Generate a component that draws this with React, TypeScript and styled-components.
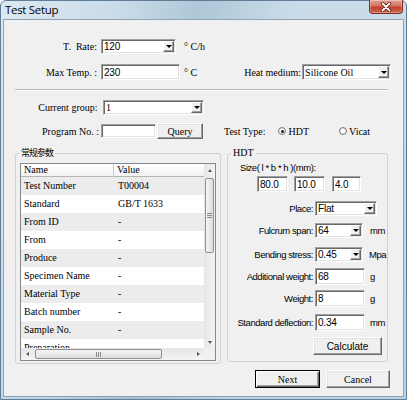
import styled, { createGlobalStyle, css } from 'styled-components';

const SONG = `"Liberation Serif", "Noto Sans CJK SC", serif`;
const SANS = `"Liberation Sans", Arial, sans-serif`;
const CJK = `"Noto Sans CJK SC", sans-serif`;

type Face = 'song' | 'sans';
const face = (f?: Face) => (f === 'sans' ? SANS : SONG);

const GlobalStyle = createGlobalStyle`
  html, body { margin: 0; padding: 0; background: #ffffff; }
  *, *::before, *::after { box-sizing: border-box; }
`;

const Window = styled.div`
  width: 407px;
  height: 400px;
  display: flex;
  flex-direction: column;
  padding: 0 3px 3px;
  border: 1px solid #5f7d96;
  border-radius: 6px 6px 0 0;
  background:
    linear-gradient(100deg, rgba(255, 255, 255, 0.35) 0%, rgba(255, 255, 255, 0) 25%,
      rgba(60, 120, 140, 0.2) 42%, rgba(255, 255, 255, 0) 62%),
    linear-gradient(180deg, #cadcea 0%, #bcd3e3 100%);
`;

const TitleBar = styled.div`
  height: 19px;
  display: flex;
  align-items: flex-start;
  justify-content: space-between;
`;

const Title = styled.span`
  margin: 2px 0 0 1px;
  font: 11.5px/14px "Open Sans", sans-serif;
  letter-spacing: -0.3px;
  color: #000;
`;

const CloseButton = styled.div`
  width: 34px;
  height: 14px;
  margin-top: -1px;
  display: flex;
  align-items: center;
  justify-content: center;
  border: 1px solid #7d2a20;
  border-top: none;
  border-radius: 0 0 4px 4px;
  background: linear-gradient(180deg, #e4a394 0%, #d4725f 45%, #c0402c 55%, #d2664f 100%);
  box-shadow: inset 0 0 0 1px rgba(255, 255, 255, 0.3);
`;

const Client = styled.div`
  flex: 1;
  display: flex;
  flex-direction: column;
  padding-top: 18px;
  background: #f0f0f0;
  box-shadow: 0 0 0 1px #8ea3b5;
  font-family: ${SONG};
  font-size: 10px;
  color: #000;
`;

const Row = styled.div<{ $top?: number }>`
  display: flex;
  align-items: center;
  height: 16px;
  margin-top: ${(p) => p.$top ?? 0}px;
`;

const Label = styled.span<{ $w?: number; $gap?: number; $left?: number }>`
  flex: none;
  ${(p) => p.$w !== undefined && css`width: ${p.$w}px;`}
  margin: 0 ${(p) => p.$gap ?? 2}px 0 ${(p) => p.$left ?? 0}px;
  text-align: right;
  white-space: pre;
`;

const Unit = styled.span<{ $gap: number; $font?: Face }>`
  flex: none;
  margin-left: ${(p) => p.$gap}px;
  font-family: ${(p) => face(p.$font)};
  font-size: ${(p) => (p.$font === 'sans' ? '9.5px' : '10px')};
  white-space: nowrap;
`;

const Field = styled.div<{ $w: number; $h?: number; $font?: Face; $left?: number }>`
  flex: none;
  display: flex;
  align-items: center;
  width: ${(p) => p.$w}px;
  height: ${(p) => p.$h ?? 16}px;
  margin-left: ${(p) => p.$left ?? 0}px;
  padding-left: 2px;
  background: #fff;
  border: 1px solid;
  border-color: #a0a0a0 #ffffff #ffffff #a0a0a0;
  box-shadow: inset 1px 1px 0 #696969, inset -1px -1px 0 #e3e3e3;
  font-family: ${(p) => face(p.$font)};
  font-size: 10px;
  letter-spacing: ${(p) => (p.$font === 'sans' ? '-0.2px' : '0')};
  white-space: nowrap;
  overflow: hidden;
`;

const DropButton = styled.span`
  flex: none;
  width: 11px;
  align-self: stretch;
  margin: 1px 1px 1px auto;
  display: flex;
  align-items: center;
  justify-content: center;
  background: #f0f0f0;
  border: 1px solid;
  border-color: #ffffff #696969 #696969 #ffffff;
  box-shadow: inset -1px -1px 0 #a0a0a0;

  &::after {
    content: '';
    border-left: 3px solid transparent;
    border-right: 3px solid transparent;
    border-top: 3px solid #000;
  }
`;

const Button = styled.button<{ $w: number; $h: number; $font?: Face; $default?: boolean; $left?: number }>`
  flex: none;
  width: ${(p) => p.$w}px;
  height: ${(p) => p.$h}px;
  margin: 0 0 0 ${(p) => p.$left ?? 0}px;
  padding: 0;
  background: #f0f0f0;
  border: 1px solid;
  border-color: #ffffff #696969 #696969 #ffffff;
  box-shadow: inset -1px -1px 0 #a0a0a0, inset 1px 1px 0 #e3e3e3;
  font-family: ${(p) => face(p.$font)};
  font-size: 10px;
  color: #000;

  ${(p) =>
    p.$default &&
    css`
      border-color: #000;
      box-shadow: inset 1px 1px 0 #fff, inset -1px -1px 0 #696969, inset -2px -2px 0 #a0a0a0;
    `}
`;

const Radio = styled.span<{ $checked?: boolean; $left: number }>`
  flex: none;
  width: 8px;
  height: 8px;
  margin: 0 2px 0 ${(p) => p.$left}px;
  display: flex;
  align-items: center;
  justify-content: center;
  border: 1px solid #7b7b7b;
  border-radius: 50%;
  background: radial-gradient(circle, #ffffff 35%, #d2d2d2 100%);

  &::after {
    content: '';
    display: ${(p) => (p.$checked ? 'block' : 'none')};
    width: 3px;
    height: 3px;
    border-radius: 50%;
    background: #1a1a1a;
  }
`;

const Separator = styled.div`
  height: 2px;
  margin: 9px 15px 0 11px;
  border-top: 1px solid #b9b9b9;
  border-bottom: 1px solid #ffffff;
`;

const Groups = styled.div`
  display: flex;
  gap: 6px;
  margin-top: 8px;
  padding-left: 11px;
`;

const Group = styled.fieldset<{ $w: number; $h: number; $pad: string }>`
  flex: none;
  width: ${(p) => p.$w}px;
  height: ${(p) => p.$h}px;
  min-width: 0;
  margin: 0;
  padding: ${(p) => p.$pad};
  border: 1px solid #d0d0d0;
  border-radius: 3px;
`;

const Legend = styled.legend<{ $cjk?: boolean }>`
  padding: 0 2px;
  margin-left: -1px;
  line-height: 12px;
  font-family: ${(p) => (p.$cjk ? CJK : SONG)};
  font-size: ${(p) => (p.$cjk ? '9px' : '10px')};
  letter-spacing: ${(p) => (p.$cjk ? '-1px' : '0')};
`;

/* list view */

const ListView = styled.div`
  width: 196px;
  height: 198px;
  display: grid;
  grid-template-columns: 1fr 11px;
  grid-template-rows: 1fr 12px;
  border: 1px solid #828790;
  background: #fff;
  overflow: hidden;
`;

const ListBody = styled.div`
  overflow: hidden;
`;

const HeaderRow = styled.div`
  display: grid;
  grid-template-columns: 93px 110px;
  height: 13px;
`;

const HeaderCell = styled.div`
  padding-left: 3px;
  line-height: 12px;
  background: linear-gradient(180deg, #ffffff 0%, #f2f2f2 100%);
  border-right: 1px solid #c9c9c9;
  border-bottom: 1px solid #b5b5b5;
  white-space: nowrap;
`;

const DataRow = styled.div<{ $shade: boolean }>`
  display: grid;
  grid-template-columns: 93px 110px;
  height: 18px;
  line-height: 18px;
  background: ${(p) => (p.$shade ? '#ececec' : '#ffffff')};
`;

const Cell = styled.div<{ $pad: number }>`
  padding-left: ${(p) => p.$pad}px;
  white-space: nowrap;
  overflow: hidden;
`;

const ScrollTrack = styled.div<{ $dir: 'v' | 'h' }>`
  display: flex;
  flex-direction: ${(p) => (p.$dir === 'v' ? 'column' : 'row')};
  background: ${(p) =>
    p.$dir === 'v'
      ? 'linear-gradient(90deg, #e6e6e6 0%, #f4f4f4 100%)'
      : 'linear-gradient(180deg, #e6e6e6 0%, #f4f4f4 100%)'};
`;

const ScrollArrow = styled.div<{ $dir: 'up' | 'down' | 'left' | 'right' }>`
  flex: none;
  width: ${(p) => (p.$dir === 'up' || p.$dir === 'down' ? '100%' : '12px')};
  height: ${(p) => (p.$dir === 'up' || p.$dir === 'down' ? '12px' : '100%')};
  display: flex;
  align-items: center;
  justify-content: center;

  &::after {
    content: '';
    ${(p) =>
      p.$dir === 'up'
        ? css`border-left: 2.5px solid transparent; border-right: 2.5px solid transparent; border-bottom: 3px solid #555;`
        : p.$dir === 'down'
        ? css`border-left: 2.5px solid transparent; border-right: 2.5px solid transparent; border-top: 3px solid #555;`
        : p.$dir === 'left'
        ? css`border-top: 2.5px solid transparent; border-bottom: 2.5px solid transparent; border-right: 3px solid #555;`
        : css`border-top: 2.5px solid transparent; border-bottom: 2.5px solid transparent; border-left: 3px solid #555;`}
  }
`;

const Thumb = styled.div<{ $dir: 'v' | 'h'; $size: number }>`
  flex: none;
  display: flex;
  align-items: center;
  justify-content: center;
  gap: 1px;
  flex-direction: ${(p) => (p.$dir === 'v' ? 'column' : 'row')};
  ${(p) =>
    p.$dir === 'v'
      ? css`height: ${p.$size}px; margin: 2px 1px 0;`
      : css`width: ${p.$size}px; margin: 1px 0 1px 2px;`}
  border: 1px solid #8f8f8f;
  border-radius: 2px;
  background: ${(p) =>
    p.$dir === 'v'
      ? 'linear-gradient(90deg, #f6f6f6 0%, #dcdcdc 100%)'
      : 'linear-gradient(180deg, #f6f6f6 0%, #dcdcdc 100%)'};
`;

const Grip = styled.span<{ $dir: 'v' | 'h' }>`
  flex: none;
  background: #8a8a8a;
  ${(p) => (p.$dir === 'v' ? css`width: 5px; height: 1px;` : css`width: 1px; height: 5px;`)}
`;

const Spacer = styled.div`
  flex: 1;
`;

const Corner = styled.div`
  background: #f0f0f0;
`;

/* HDT panel */

const HdtRow = styled.div<{ $top: number; $h?: number; $left?: number }>`
  display: flex;
  align-items: center;
  height: ${(p) => p.$h ?? 16}px;
  margin-top: ${(p) => p.$top}px;
  margin-left: ${(p) => p.$left ?? 0}px;
  font-family: ${SANS};
  font-size: 9.5px;
  letter-spacing: -0.45px;
  white-space: nowrap;
`;

const HdtLabel = styled.span`
  flex: none;
  width: 81px;
  margin-right: 2px;
  display: flex;
  justify-content: flex-end;
  white-space: nowrap;
`;

const Footer = styled.div`
  display: flex;
  justify-content: flex-end;
  gap: 6px;
  margin-top: 6px;
  padding-right: 13px;
`;

const params: [string, string][] = [
  ['Test Number', 'T00004'],
  ['Standard', 'GB/T 1633'],
  ['From ID', '-'],
  ['From', '-'],
  ['Produce', '-'],
  ['Specimen Name', '-'],
  ['Material Type', '-'],
  ['Batch number', '-'],
  ['Sample No.', '-'],
  ['Preparation', '-'],
];

function Combo({ w, h = 15, value, font }: { w: number; h?: number; value: string; font?: Face }) {
  return (
    <Field $w={w} $h={h} $font={font}>
      {value}
      <DropButton />
    </Field>
  );
}

export default function App() {
  return (
    <>
      <GlobalStyle />
      <Window>
        <TitleBar>
          <Title>Test Setup</Title>
          <CloseButton>
            <svg width="12" height="10" viewBox="0 0 12 10">
              <path d="M2.5 1.5 L9.5 8.5 M9.5 1.5 L2.5 8.5" stroke="#5a1a14" strokeWidth="3.4" strokeLinecap="round" />
              <path d="M2.5 1.5 L9.5 8.5 M9.5 1.5 L2.5 8.5" stroke="#ffffff" strokeWidth="1.8" strokeLinecap="round" />
            </svg>
          </CloseButton>
        </TitleBar>

        <Client>
          <Row>
            <Label $w={93} $gap={4}>T.  Rate:</Label>
            <Combo w={75} value="120" font="sans" />
            <Unit $gap={8}>° C/h</Unit>
          </Row>

          <Row $top={10}>
            <Label $w={93} $gap={4}>Max Temp. :</Label>
            <Field $w={79} $font="sans">230</Field>
            <Unit $gap={4}>° C</Unit>
            <Label $left={47} $gap={1}>Heat medium:</Label>
            <Combo w={89} h={16} value="Silicone Oil" />
          </Row>

          <Separator />

          <Row $top={8}>
            <Label $w={96} $gap={3}>Current group: </Label>
            <Combo w={101} value="1" />
          </Row>

          <Row $top={8}>
            <Label $w={95} $gap={2}>Program No. :</Label>
            <Field $w={55} $h={14} />
            <Button $w={46} $h={16} $left={1}>Query</Button>
            <Label $left={21} $gap={0}>Test Type:</Label>
            <Radio $left={13} $checked />
            <span>HDT</span>
            <Radio $left={30} />
            <span>Vicat</span>
          </Row>

          <Groups>
            <Group $w={206} $h={217} $pad="4px 3px 2px 4px">
              <Legend $cjk>常规参数</Legend>
              <ListView>
                <ListBody>
                  <HeaderRow>
                    <HeaderCell>Name</HeaderCell>
                    <HeaderCell>Value</HeaderCell>
                  </HeaderRow>
                  {params.map(([name, value], i) => (
                    <DataRow key={name} $shade={i % 2 === 0}>
                      <Cell $pad={3}>{name}</Cell>
                      <Cell $pad={4}>{value}</Cell>
                    </DataRow>
                  ))}
                </ListBody>
                <ScrollTrack $dir="v">
                  <ScrollArrow $dir="up" />
                  <Thumb $dir="v" $size={75}>
                    <Grip $dir="v" />
                    <Grip $dir="v" />
                    <Grip $dir="v" />
                  </Thumb>
                  <Spacer />
                  <ScrollArrow $dir="down" />
                </ScrollTrack>
                <ScrollTrack $dir="h">
                  <ScrollArrow $dir="left" />
                  <Thumb $dir="h" $size={127}>
                    <Grip $dir="h" />
                    <Grip $dir="h" />
                    <Grip $dir="h" />
                  </Thumb>
                  <Spacer />
                  <ScrollArrow $dir="right" />
                </ScrollTrack>
                <Corner />
              </ListView>
            </Group>

            <Group $w={161} $h={215} $pad="2px 4px 2px 4px">
              <Legend>HDT</Legend>
              <HdtRow $top={0} $h={12} $left={8}>Size( l * b * h )(mm):</HdtRow>
              <HdtRow $top={3} $left={25}>
                <Field $w={31} $font="sans">80.0</Field>
                <Field $w={31} $font="sans" $left={6}>10.0</Field>
                <Field $w={29} $font="sans" $left={7}>4.0</Field>
              </HdtRow>
              <HdtRow $top={9} $h={15}>
                <HdtLabel>Place:</HdtLabel>
                <Combo w={62} value="Flat" font="sans" />
              </HdtRow>
              <HdtRow $top={7} $h={15}>
                <HdtLabel>Fulcrum span:</HdtLabel>
                <Combo w={48} value="64" font="sans" />
                <Unit $gap={7} $font="sans">mm</Unit>
              </HdtRow>
              <HdtRow $top={9} $h={15}>
                <HdtLabel>Bending stress:</HdtLabel>
                <Combo w={48} value="0.45" font="sans" />
                <Unit $gap={6} $font="sans">Mpa</Unit>
              </HdtRow>
              <HdtRow $top={6} $h={17}>
                <HdtLabel>Additional weight:</HdtLabel>
                <Field $w={50} $h={17} $font="sans">68</Field>
                <Unit $gap={5} $font="sans">g</Unit>
              </HdtRow>
              <HdtRow $top={5} $h={17}>
                <HdtLabel>Weight:</HdtLabel>
                <Field $w={50} $h={17} $font="sans">8</Field>
                <Unit $gap={5} $font="sans">g</Unit>
              </HdtRow>
              <HdtRow $top={7} $h={17}>
                <HdtLabel>Standard deflection:</HdtLabel>
                <Field $w={50} $h={17} $font="sans">0.34</Field>
                <Unit $gap={5} $font="sans">mm</Unit>
              </HdtRow>
              <HdtRow $top={6} $h={18} $left={81}>
                <Button $w={69} $h={18} $font="sans">Calculate</Button>
              </HdtRow>
            </Group>
          </Groups>

          <Footer>
            <Button $w={65} $h={18} $default>Next</Button>
            <Button $w={64} $h={18}>Cancel</Button>
          </Footer>
        </Client>
      </Window>
    </>
  );
}
